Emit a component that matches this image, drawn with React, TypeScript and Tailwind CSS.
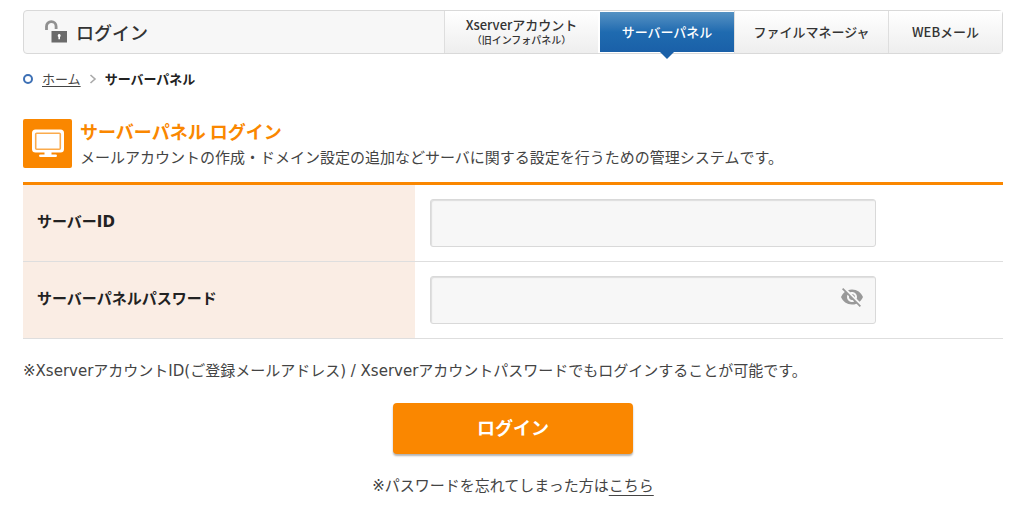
import { useState } from "react";
import { MdVisibility, MdVisibilityOff } from "react-icons/md";
import clsx from "clsx";

const tabs = [
  { label: "Xserverアカウント", sub: "（旧インフォパネル）", width: "w-[154px]" },
  { label: "サーバーパネル", width: "w-[136px]", active: true },
  { label: "ファイルマネージャ", width: "w-[154px]" },
  { label: "WEBメール", width: "w-[114px]" },
];

function UnlockIcon() {
  return (
    <svg width="24" height="24" viewBox="0 0 24 24" aria-hidden="true">
      <path d="M2.5 10V6.5a4.8 4.8 0 0 1 9.6 0V9" fill="none" stroke="#909090" strokeWidth="2.8" />
      <rect x="7.5" y="11" width="15.5" height="11.5" fill="#6b6b6b" />
      <path d="M15.2 14a1.6 1.6 0 0 0-.8 2.9V19.3h1.6v-2.4a1.6 1.6 0 0 0-.8-2.9z" fill="#fff" />
    </svg>
  );
}

function MonitorIcon() {
  return (
    <svg width="49" height="49" viewBox="0 0 49 49" className="shrink-0" aria-hidden="true">
      <rect width="49" height="49" rx="2" fill="#fa8700" />
      <rect x="9" y="10.5" width="32" height="23" rx="3.5" fill="#fff" />
      <rect x="12.7" y="14.2" width="24.6" height="16" rx="1" fill="#fff" stroke="#fbab4d" strokeWidth="1.6" />
      <path d="M21.5 33h7v2.5h4.2a1.2 1.2 0 0 1 0 2.5H17.3a1.2 1.2 0 0 1 0-2.5h4.2z" fill="#fff" />
    </svg>
  );
}

function Header() {
  return (
    <header className="flex h-11 rounded-sm border border-[#d9d9d9] bg-[#f7f7f7]">
      <h1 className="flex flex-1 items-center gap-2 pl-5 text-lg font-medium text-[#333]">
        <UnlockIcon />
        ログイン
      </h1>
      <nav className="flex">
        {tabs.map((tab) => (
          <a
            key={tab.label}
            href="#"
            className={clsx(
              "relative flex flex-col items-center justify-center text-[13px] leading-4 font-medium",
              tab.width,
              tab.active
                ? "border-y border-l-2 border-white bg-linear-to-b from-[#5592c3] via-[#1f6bb0] to-[#1a60a8] text-white"
                : "border-l border-[#dedede] bg-linear-to-b from-white to-[#eeeeee] text-[#333]",
            )}
          >
            {tab.label}
            {tab.sub && <span className="text-[10px] leading-[14px]">{tab.sub}</span>}
            {tab.active && (
              <svg width="14" height="7" viewBox="0 0 14 7" className="absolute top-full left-1/2 -translate-x-1/2" aria-hidden="true">
                <path d="M0 0h14L7 7z" fill="#1a60a8" />
              </svg>
            )}
          </a>
        ))}
      </nav>
    </header>
  );
}

function Breadcrumb() {
  return (
    <div className="mt-[15px] flex h-5 items-center text-[13px]">
      <span className="mr-px size-[10px] rounded-full border-2 border-[#3d70b5]" />
      <a href="#" className="ml-2 underline underline-offset-2">ホーム</a>
      <svg width="8" height="10" viewBox="0 0 8 10" className="mx-2" aria-hidden="true">
        <path d="M1.5 1 6 5 1.5 9" fill="none" stroke="#aaa" strokeWidth="1.6" />
      </svg>
      <span className="font-bold text-[#222]">サーバーパネル</span>
    </div>
  );
}

const inputClass =
  "block h-12 w-full rounded-[3px] border border-[#d9d9d9] bg-[#f7f7f7] px-3 shadow-[inset_1px_1px_1px_#dddddd] outline-none";

export default function App() {
  const [visible, setVisible] = useState(false);

  return (
    <main className="bg-white pt-2.5 pr-[21px] pl-[23px] font-[family-name:'DejaVu_Sans','Noto_Sans_CJK_JP',sans-serif] text-[15px] text-[#444]">
      <div className="font-[family-name:'Noto_Sans_CJK_JP',sans-serif]">
        <Header />
        <Breadcrumb />
        <div className="mt-[30px] flex gap-2">
          <MonitorIcon />
          <div>
            <h2 className="text-lg leading-6 font-bold text-[#fa8700]">サーバーパネル ログイン</h2>
            <p className="leading-7">
              メールアカウントの作成・ドメイン設定の追加などサーバに関する設定を行うための管理システムです。
            </p>
          </div>
        </div>
      </div>

      <form onSubmit={(e) => e.preventDefault()}>
        <table className="mt-[11px] w-full border-t-3 border-[#fa8700]">
          <tbody>
            <tr className="border-b border-[#dedede]">
              <th className="w-2/5 bg-[#faede4] pb-0.5 pl-3.5 text-left font-bold text-[#222]">
                <label htmlFor="server-id">サーバーID</label>
              </th>
              <td className="px-[15px] py-3.5">
                <div className="w-4/5">
                  <input id="server-id" type="text" className={inputClass} />
                </div>
              </td>
            </tr>
            <tr className="border-b border-[#dedede]">
              <th className="w-2/5 bg-[#faede4] pb-0.5 pl-3.5 text-left font-bold text-[#222]">
                <label htmlFor="server-password">サーバーパネルパスワード</label>
              </th>
              <td className="px-[15px] py-3.5">
                <div className="relative w-4/5">
                  <input id="server-password" type={visible ? "text" : "password"} className={inputClass} />
                  <button
                    type="button"
                    aria-label="パスワードを表示"
                    onClick={() => setVisible(!visible)}
                    className="absolute inset-y-0 right-3 pb-1.5 text-[#999]"
                  >
                    {visible ? <MdVisibility size={24} /> : <MdVisibilityOff size={24} />}
                  </button>
                </div>
              </td>
            </tr>
          </tbody>
        </table>
        <p className="mt-5 leading-6">
          ※XserverアカウントID(ご登録メールアドレス) / Xserverアカウントパスワードでもログインすることが可能です。
        </p>
        <button
          type="submit"
          className="mx-auto mt-5 block h-[51px] w-60 rounded bg-[#fa8700] text-lg font-bold text-white shadow-[0_2px_2px_rgba(0,0,0,0.3)]"
        >
          ログイン
        </button>
      </form>
      <p className="mt-5 text-center leading-6">
        ※パスワードを忘れてしまった方は<a href="#" className="underline underline-offset-4">こちら</a>
      </p>
    </main>
  );
}
